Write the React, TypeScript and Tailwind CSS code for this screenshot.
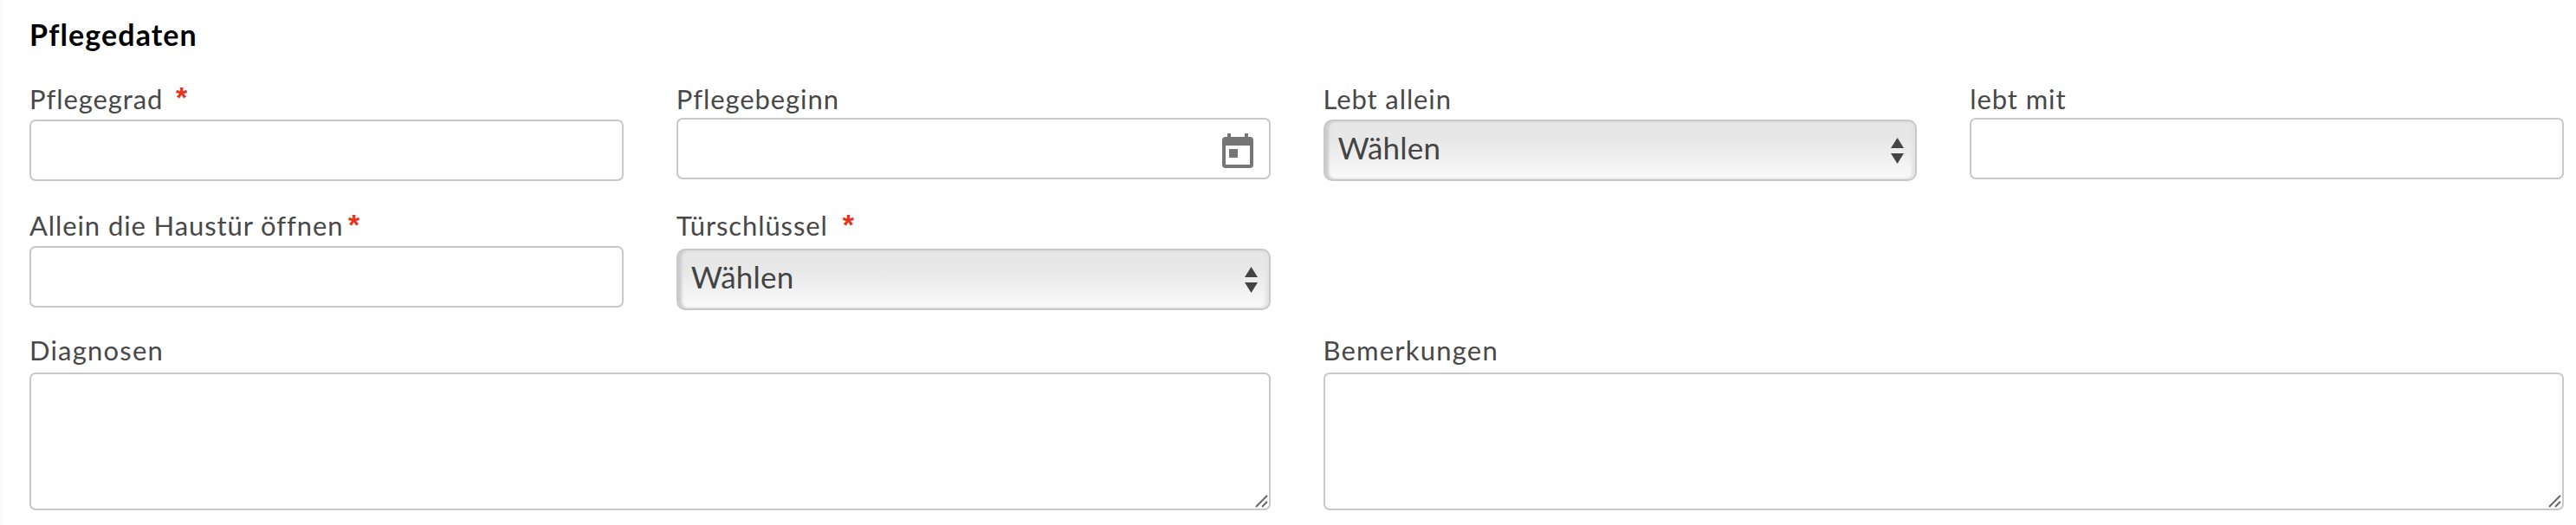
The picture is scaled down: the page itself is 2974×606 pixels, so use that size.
const labelText = "relative h-[36px] text-[31px] leading-[40px] text-[#484848] tracking-[0.9px] whitespace-nowrap";

function Required({ className }: { className: string }) {
  return <span className={`absolute font-['Liberation_Sans',sans-serif] text-[#e8321c] text-[34px] font-bold leading-none tracking-normal ${className}`}>*</span>;
}

function ResizeHandle() {
  return (
    <svg width="16" height="16" viewBox="0 0 16 16" className="absolute bottom-[3px] right-[2px] stroke-[#666666]" fill="none" strokeWidth="2">
      <path d="M1 15 L14 2" />
      <path d="M8 15 L14 9" />
    </svg>
  );
}

function TextField({ label, star, top = "mt-[8px]" }: { label: string; star?: string; top?: string }) {
  return (
    <div className="flex flex-col">
      <label className={labelText}>
        {label}
        {star && <Required className={star} />}
      </label>
      <input type="text" className={`h-[71px] ${top} w-full rounded-[7px] border-2 border-[#c8c8c8] bg-white`} />
    </div>
  );
}

function SelectField({ label, star, top = "mt-[8px]" }: { label: string; star?: string; top?: string }) {
  return (
    <div className="flex flex-col">
      <label className={labelText}>
        {label}
        {star && <Required className={star} />}
      </label>
      <div className={`${top} flex h-[71px] w-full items-center justify-between rounded-[10px] border-2 border-[#c8c8c8] bg-gradient-to-b from-[#e7e7e7] from-30% to-[#fafafa] pl-[15px] pr-[13px] shadow-[inset_4px_0_3px_#cccccc,inset_-4px_0_3px_#e4e4e4]`}>
        <span className="-translate-y-[3px] text-[35px] leading-none tracking-[0.2px] text-[#444444]">Wählen</span>
        <svg width="15" height="30" viewBox="0 0 15 30" className="fill-[#444444]">
          <path d="M7.5 0 L15 12 L0 12 Z" />
          <path d="M0 18 L15 18 L7.5 30 Z" />
        </svg>
      </div>
    </div>
  );
}

function DateField({ label }: { label: string }) {
  return (
    <div className="flex flex-col">
      <label className={labelText}>{label}</label>
      <div className="mt-[6px] flex h-[71px] w-full items-start justify-end rounded-[7px] border-2 border-[#c8c8c8] bg-white pr-[18px] pt-[16px]">
        <svg width="36" height="40" viewBox="0 0 36 40" className="fill-[#757575]">
          <path fillRule="evenodd" d="M6 0h4v4h16V0h4v4h2a4 4 0 0 1 4 4v28a4 4 0 0 1-4 4H4a4 4 0 0 1-4-4V8a4 4 0 0 1 4-4h2V0zM4 14v22h28V14H4z" />
          <rect x="8" y="18" width="10" height="10" />
        </svg>
      </div>
    </div>
  );
}

function AreaField({ label }: { label: string }) {
  return (
    <div className="col-span-2 flex flex-col">
      <label className={`${labelText} -translate-y-[4px] tracking-[1.2px]`}>{label}</label>
      <div className="relative mt-[6px] h-[159px]">
        <textarea className="block h-full w-full resize-none rounded-[7px] border-2 border-[#c8c8c8] bg-white" />
        <ResizeHandle />
      </div>
    </div>
  );
}

export default function App() {
  return (
    <div className="h-[606px] w-[2974px] overflow-hidden border-l-4 border-[#fafafa] bg-white pl-[30px] pr-[14px] pt-[18px] font-['Lato','Liberation_Sans',sans-serif]">
      <h2 className="h-[44px] text-[34px] font-bold leading-[44px] tracking-[1.1px] text-black">Pflegedaten</h2>
      <div className="mt-[32px] grid grid-cols-4 gap-x-[61px]">
        <TextField label="Pflegegrad" star="left-[169px] top-[1px]" />
        <DateField label="Pflegebeginn" />
        <SelectField label="Lebt allein" />
        <TextField label="lebt mit" top="mt-[6px]" />
      </div>
      <div className="mt-[31px] grid grid-cols-4 gap-x-[61px]">
        <TextField label="Allein die Haustür öffnen" star="left-[368px] top-[2px]" />
        <SelectField label="Türschlüssel" star="left-[192px] top-[2px]" top="mt-[11px]" />
      </div>
      <div className="mt-[30px] grid grid-cols-4 gap-x-[61px]">
        <AreaField label="Diagnosen" />
        <AreaField label="Bemerkungen" />
      </div>
    </div>
  );
}
